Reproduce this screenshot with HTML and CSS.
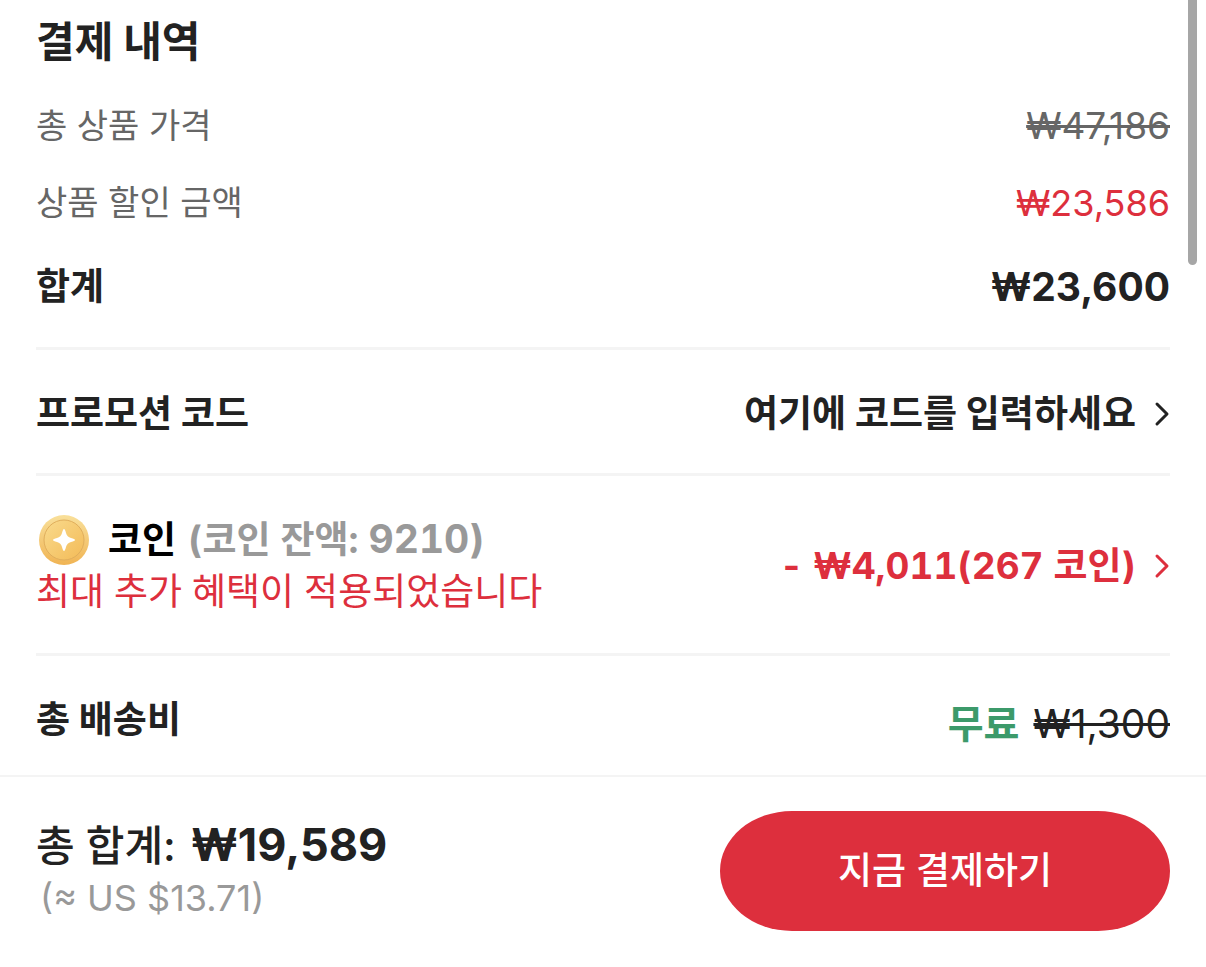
FILE: index.html
```html
<!DOCTYPE html>
<html lang="ko">
<head>
    <meta charset="UTF-8">
    <meta name="viewport" content="width=device-width, initial-scale=1.0">
    <title>결제 내역</title>
    <link rel="stylesheet" href="styles.css">
</head>
<body>
    <main class="summary">
        <h1>결제 내역</h1>

        <div class="row">
            <span class="label">총 상품 가격</span>
            <del class="original">₩47,186</del>
        </div>
        <div class="row">
            <span class="label">상품 할인 금액</span>
            <span class="discount">₩23,586</span>
        </div>
        <div class="row subtotal">
            <span>합계</span>
            <span class="amount">₩23,600</span>
        </div>

        <div class="row section promo">
            <span>프로모션 코드</span>
            <button type="button" class="link-button">
                여기에 코드를 입력하세요
                <svg class="chevron" viewBox="0 0 16 28" aria-hidden="true"><path d="M3 4l10 10L3 24"/></svg>
            </button>
        </div>

        <div class="row section coins">
            <div>
                <div class="coin-title">
                    <svg class="coin" viewBox="0 0 52 52" aria-hidden="true">
                        <defs>
                            <linearGradient id="coinRim" x1="0" y1="0" x2="0" y2="1">
                                <stop offset="0" stop-color="#f9e09a"/>
                                <stop offset="1" stop-color="#f0b454"/>
                            </linearGradient>
                            <linearGradient id="coinFace" x1="0" y1="0" x2="1" y2="1">
                                <stop offset="0" stop-color="#f9da8c"/>
                                <stop offset="1" stop-color="#f3bb58"/>
                            </linearGradient>
                        </defs>
                        <circle cx="26" cy="26" r="25" fill="url(#coinRim)"/>
                        <circle cx="26" cy="26" r="20" fill="url(#coinFace)" stroke="#e0ae5c" stroke-width="1"/>
                        <path d="M26 15q1 0 2 4q1 4 5 5q4 1 4 2q0 1-4 2q-4 1-5 5q-1 4-2 4q-1 0-2-4q-1-4-5-5q-4-1-4-2q0-1 4-2q4-1 5-5q1-4 2-4z" fill="#fff"/>
                    </svg>
                    <span>코인 <span class="balance">(코인 잔액: <span class="amount">9210)</span></span></span>
                </div>
                <p class="coin-note">최대 추가 혜택이 적용되었습니다</p>
            </div>
            <button type="button" class="link-button coin-button">
                - ₩4,011(267 코인)
                <svg class="chevron" viewBox="0 0 16 28" aria-hidden="true"><path d="M3 4l10 10L3 24"/></svg>
            </button>
        </div>

        <div class="row section shipping">
            <span>총 배송비</span>
            <span class="shipping-price"><span class="free">무료</span> <del>₩1,300</del></span>
        </div>
        <div class="scrollbar"></div>
    </main>

    <footer class="checkout">
        <div>
            <div class="total">총 합계: <strong>₩19,589</strong></div>
            <div class="usd">(≈ US $13.71)</div>
        </div>
        <button type="button" class="pay-button">지금 결제하기</button>
    </footer>
</body>
</html>
```

FILE: styles.css
```css
* {
    margin: 0;
    padding: 0;
    box-sizing: border-box;
}

body {
    min-height: 100vh;
    display: flex;
    flex-direction: column;
    background: #fff;
    color: #222;
    font-family: Inter, "Noto Sans CJK KR", sans-serif;
    font-size: 37px;
    line-height: 52px;
}

button {
    border: none;
    background: none;
    font: inherit;
    color: inherit;
    cursor: pointer;
}

.summary {
    position: relative;
    padding: 12px 36px 0;
}

h1 {
    margin-bottom: 15px;
    font-size: 42px;
    line-height: 60px;
    font-weight: 700;
}

.row {
    display: flex;
    align-items: center;
    justify-content: space-between;
    min-height: 77px;
}

.label {
    color: #666;
    font-size: 34px;
}

.original {
    color: #666;
}

.discount {
    color: #dd2f3d;
    font-size: 36px;
}

.subtotal {
    min-height: 92px;
    margin-bottom: 14px;
    font-weight: 700;
}

.amount {
    font-size: 39px;
}

.section {
    border-top: 3px solid #f4f4f4;
    font-weight: 700;
}

.promo {
    min-height: 126px;
    padding-top: 4px;
}

.link-button {
    display: flex;
    align-items: center;
    gap: 18px;
}

.chevron {
    width: 16px;
    height: 28px;
    fill: none;
    stroke: currentColor;
    stroke-width: 3;
    stroke-linecap: round;
    stroke-linejoin: round;
}

.coins {
    min-height: 180px;
    padding-top: 2px;
    font-variant-numeric: tabular-nums;
}

.coin-title {
    display: flex;
    align-items: center;
    gap: 16px;
    color: #000;
}

.coin {
    width: 56px;
    height: 52px;
}

.balance {
    margin-left: 2px;
    color: #999;
}

.coin-note {
    color: #dd2f3d;
    font-weight: 400;
}

.coin-button {
    color: #dd2f3d;
    font-variant-numeric: tabular-nums;
}

.shipping {
    min-height: 122px;
    padding-top: 8px;
}

.shipping-price {
    padding-top: 8px;
    font-size: 39px;
    font-weight: 400;
}

.free {
    margin-right: 3px;
    color: #3c9a6a;
    font-weight: 700;
}

.scrollbar {
    position: absolute;
    top: 0;
    right: 9px;
    width: 9px;
    height: 265px;
    border-radius: 0 0 5px 5px;
    background: #a6a6a6;
}

.checkout {
    flex: 1;
    display: flex;
    align-items: flex-start;
    justify-content: space-between;
    padding: 34px 36px;
    border-top: 2px solid #f4f4f4;
}

.total {
    margin-top: 8px;
    font-size: 42px;
    font-weight: 500;
    line-height: 52px;
}

.total strong {
    margin-left: 4px;
    font-size: 45px;
    font-weight: 700;
}

.usd {
    padding-left: 4px;
    color: #999;
    font-size: 36px;
}

.pay-button {
    width: 450px;
    max-width: 50%;
    height: 120px;
    border-radius: 72px / 60px;
    background: #dd2f3d;
    color: #fff;
    font-weight: 500;
}
```
